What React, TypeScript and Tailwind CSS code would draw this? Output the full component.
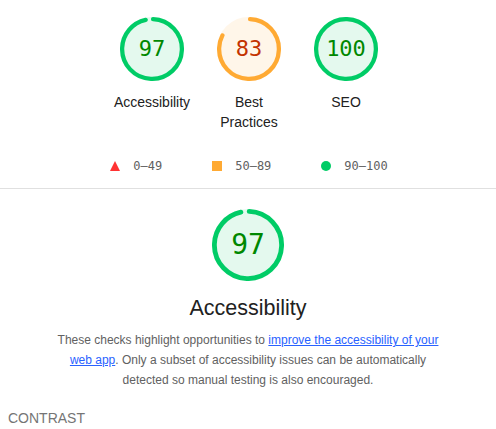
import React from "react";

type Rating = "pass" | "average" | "fail";

const palette: Record<Rating, { stroke: string; text: string }> = {
  pass: { stroke: "#00cc66", text: "#008800" },
  average: { stroke: "#ffaa33", text: "#c33300" },
  fail: { stroke: "#ff3333", text: "#cc0000" },
};

function rate(score: number): Rating {
  if (score >= 90) return "pass";
  if (score >= 50) return "average";
  return "fail";
}

function Gauge({ score, size }: { score: number; size: "sm" | "lg" }) {
  const { stroke, text } = palette[rate(score)];
  const r = 56;
  const sw = 8;
  const circ = 2 * Math.PI * r;
  const p = score / 100;
  const rot = -90 + ((0.25 * sw) / circ) * 360;
  const arc = p === 1 ? circ : Math.max(p * circ - sw / 2, 0.01);

  return (
    <div
      className={
        size === "sm"
          ? "grid place-items-center w-16 h-16"
          : "grid place-items-center w-[72px] h-[72px]"
      }
    >
      <svg viewBox="0 0 120 120" className="[grid-area:1/1] w-full h-full">
        <circle cx="60" cy="60" r={r} fill={stroke} stroke={stroke} strokeWidth={sw} opacity={0.1} />
        <circle
          cx="60"
          cy="60"
          r={r}
          fill="none"
          stroke={stroke}
          strokeWidth={sw}
          strokeLinecap="round"
          strokeDasharray={`${arc} ${circ}`}
          transform={`rotate(${rot} 60 60)`}
        />
      </svg>
      <span
        className={
          size === "sm"
            ? "[grid-area:1/1] font-['DejaVu_Sans_Mono',monospace] text-[22px] leading-none"
            : "[grid-area:1/1] font-['DejaVu_Sans_Mono',monospace] text-[28px] leading-none"
        }
        style={{ color: text }}
      >
        {score}
      </span>
    </div>
  );
}

const categories = [
  { label: "Accessibility", score: 97 },
  { label: "Best Practices", score: 83 },
  { label: "SEO", score: 100 },
];

export default function App() {
  return (
    <div className="min-h-screen bg-white text-[#212121] font-['Liberation_Sans',Arial,sans-serif]">
      {/* score gauges */}
      <div className="flex justify-center pt-[17px] pl-[2px]">
        {categories.map((c) => (
          <div key={c.label} className="w-[97px] flex flex-col items-center">
            <Gauge score={c.score} size="sm" />
            <div className="mt-[11px] w-[80px] text-center text-[14px] leading-5">{c.label}</div>
          </div>
        ))}
      </div>

      {/* score scale legend */}
      <div className="mt-[26px] pl-[2px] flex justify-center gap-[50px] font-['DejaVu_Sans_Mono',monospace] text-[12px] leading-4 text-[#616161]">
        <div className="flex items-center gap-[13px]">
          <svg width="10" height="10" viewBox="0 0 10 10">
            <polygon points="5,0 10,10 0,10" fill="#ff3333" />
          </svg>
          <span>0–49</span>
        </div>
        <div className="flex items-center gap-[13px]">
          <div className="w-[10px] h-[10px] bg-[#ffaa33]" />
          <span>50–89</span>
        </div>
        <div className="flex items-center gap-[13px]">
          <div className="w-[10px] h-[10px] rounded-full bg-[#00cc66]" />
          <span>90–100</span>
        </div>
      </div>

      <div className="mt-[14px] h-px bg-[#e0e0e0]" />

      {/* category header */}
      <div className="flex flex-col items-center pt-5">
        <Gauge score={97} size="lg" />
        <h2 className="mt-[13px] text-[21.5px] leading-7 font-normal">Accessibility</h2>
        <p className="mt-2 w-[400px] text-center text-[12px] leading-5 text-[#616161]">
          These checks highlight opportunities to{" "}
          <a href="#" className="text-[#2962ff] underline">
            improve the accessibility of your web app
          </a>
          . Only a subset of accessibility issues can be automatically detected so manual testing is also encouraged.
        </p>
      </div>

      <div className="mt-[18px] px-2 text-[14px] leading-5 uppercase text-[#757575]">Contrast</div>
    </div>
  );
}
